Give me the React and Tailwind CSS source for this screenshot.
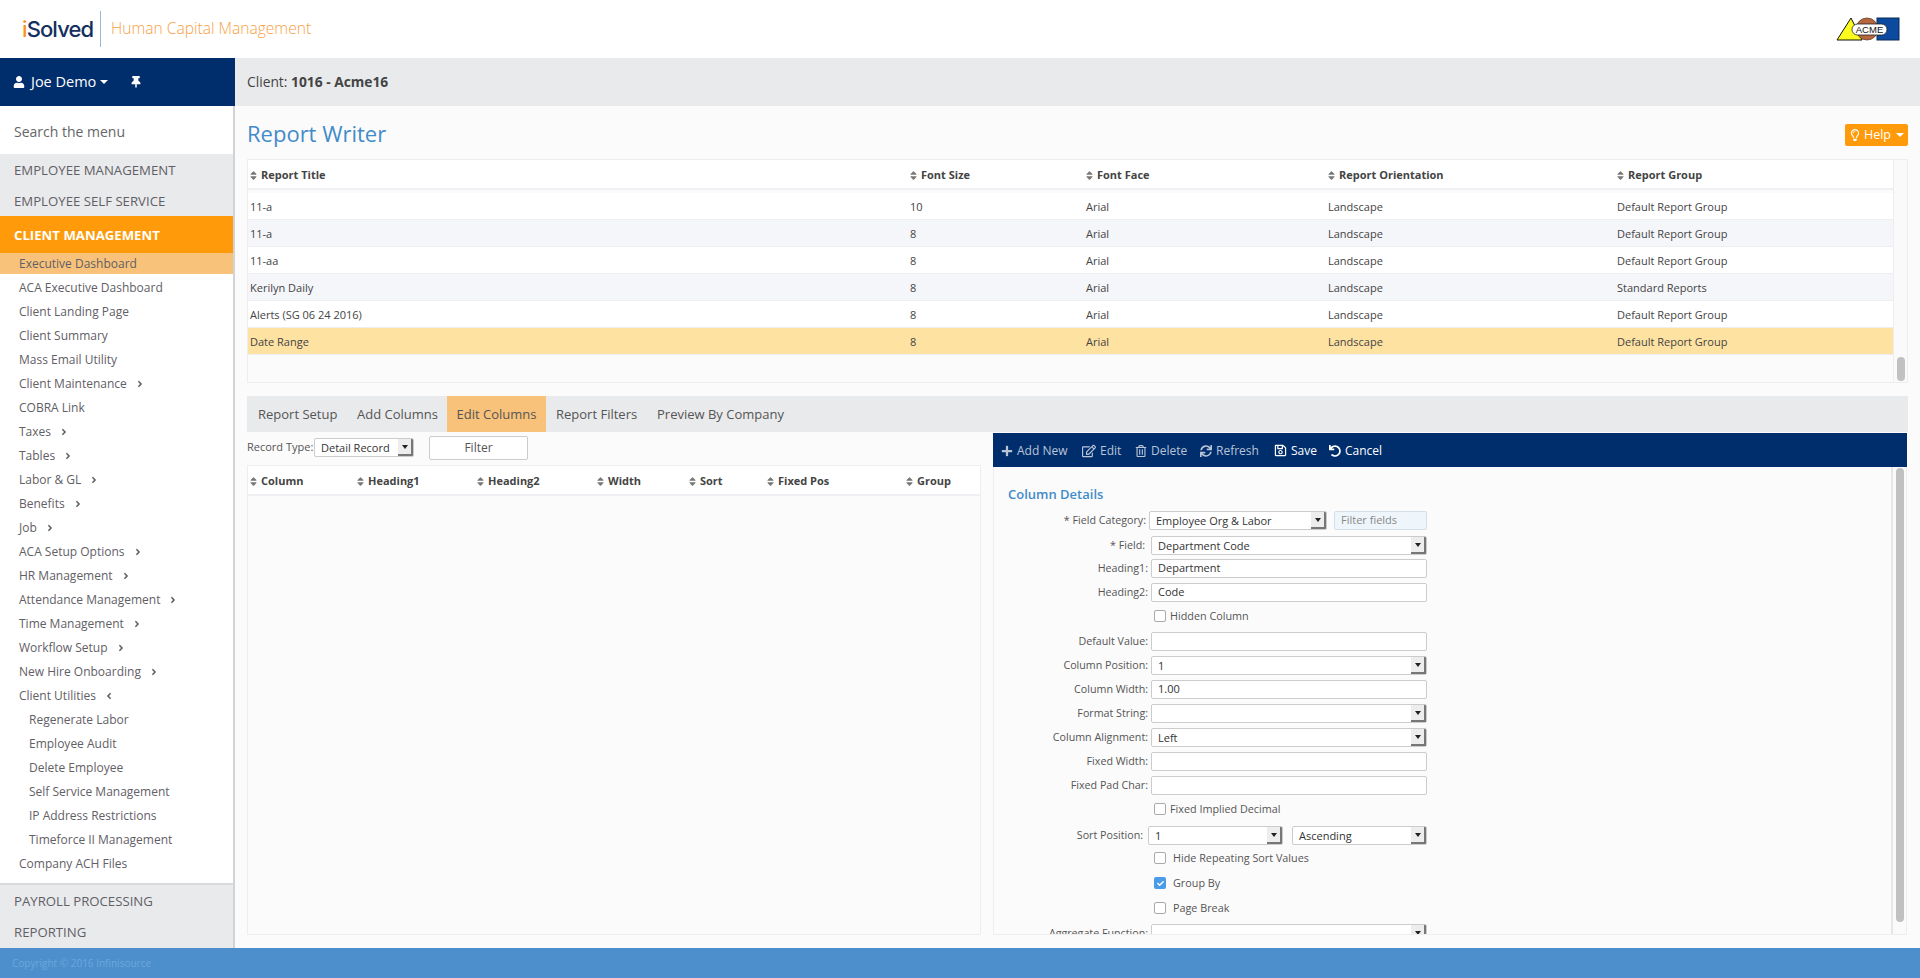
import React from "react";
import { FaUser, FaThumbtack, FaSort, FaPlus, FaRegEdit, FaRegTrashAlt, FaSync, FaRegSave, FaUndo, FaRegLightbulb, FaAngleRight, FaAngleLeft, FaCheck } from "react-icons/fa";

const menu = [
  { t: "ACA Executive Dashboard" },
  { t: "Client Landing Page" },
  { t: "Client Summary" },
  { t: "Mass Email Utility" },
  { t: "Client Maintenance", a: "r" },
  { t: "COBRA Link" },
  { t: "Taxes", a: "r" },
  { t: "Tables", a: "r" },
  { t: "Labor & GL", a: "r" },
  { t: "Benefits", a: "r" },
  { t: "Job", a: "r" },
  { t: "ACA Setup Options", a: "r" },
  { t: "HR Management", a: "r" },
  { t: "Attendance Management", a: "r" },
  { t: "Time Management", a: "r" },
  { t: "Workflow Setup", a: "r" },
  { t: "New Hire Onboarding", a: "r" },
  { t: "Client Utilities", a: "l" },
  { t: "Regenerate Labor", n: 1 },
  { t: "Employee Audit", n: 1 },
  { t: "Delete Employee", n: 1 },
  { t: "Self Service Management", n: 1 },
  { t: "IP Address Restrictions", n: 1 },
  { t: "Timeforce II Management", n: 1 },
  { t: "Company ACH Files" },
];

const reports = [
  ["11-a", "10", "Arial", "Landscape", "Default Report Group"],
  ["11-a", "8", "Arial", "Landscape", "Default Report Group"],
  ["11-aa", "8", "Arial", "Landscape", "Default Report Group"],
  ["Kerilyn Daily", "8", "Arial", "Landscape", "Standard Reports"],
  ["Alerts (SG 06 24 2016)", "8", "Arial", "Landscape", "Default Report Group"],
  ["Date Range", "8", "Arial", "Landscape", "Default Report Group"],
];

function Caret({ className }) {
  return <span className={"inline-block w-0 h-0 border-x-[4px] border-x-transparent border-t-[4px] " + className} />;
}

function SortHead({ children }) {
  return (
    <span className="flex items-center gap-[2px] font-bold text-[11px] text-[#444] pt-[2px]">
      <FaSort className="text-[11px] text-[#777] -ml-[2px]" />
      {children}
    </span>
  );
}

function Select({ value, className }) {
  return (
    <div className={"h-[19px] flex items-center rounded-[2px] border border-[#ccc] bg-white pl-[6px] text-[11px] text-[#333] relative overflow-hidden " + className}>
      <span className="pt-[1px]">{value}</span>
      <span className="absolute right-0 top-0 bottom-0 w-[15px] bg-[#ededed] border-r-2 border-b-2 border-[#777] flex items-center justify-center">
        <Caret className="border-t-[#222] !border-x-[3px]" />
      </span>
    </div>
  );
}

function TextBox({ value, className }) {
  return (
    <div className={"h-[19px] flex items-center rounded-[2px] border border-[#ccc] bg-white pl-[6px] text-[11px] text-[#333] " + className}>
      {value}
    </div>
  );
}

function Row({ label, className, labelClass = "", children }) {
  return (
    <div className={"flex items-start gap-[3px] pl-[1px] " + className}>
      <div className={"w-[153px] h-[19px] flex items-center justify-end text-[10.7px] text-[#555] pb-[1px] " + labelClass}>{label}</div>
      {children}
    </div>
  );
}

function CheckRow({ label, checked, className, gap }) {
  return (
    <div className={"flex items-center pl-[160px] " + className}>
      {checked ? (
        <span className="w-[12px] h-[12px] rounded-[2px] bg-[#4a9be8] flex items-center justify-center text-white text-[7px]"><FaCheck /></span>
      ) : (
        <span className="w-[12px] h-[12px] rounded-[2px] border border-[#aaa] bg-white" />
      )}
      <span className={"text-[10.8px] text-[#555] " + gap}>{label}</span>
    </div>
  );
}

function Tool({ icon, label, light, className }) {
  return (
    <span className={"flex items-center gap-[4px] text-[12px] pt-[1px] " + (light ? "text-white font-medium " : "text-[#b9c4d6] ") + className}>
      {icon}
      {label}
    </span>
  );
}

export default function App() {
  return (
    <div className="h-[978px] w-[1920px] overflow-hidden flex flex-col bg-white font-['Open_Sans',sans-serif] text-[#555]">
      <header className="h-[58px] flex items-center justify-between shrink-0 bg-white">
        <div className="flex items-center">
          <span className="ml-[22px] w-[70px] font-['Inter',sans-serif] font-medium text-[22px] tracking-[-0.9px] text-[#14305e]">
            <span className="text-[#f7941e]">i</span>Solved
          </span>
          <span className="ml-[8px] w-px h-[36px] bg-[#9db8d4]" />
          <span className="ml-[10px] text-[15.6px] font-light text-[#f9a03f]">Human Capital Management</span>
        </div>
        <svg width="64" height="26" viewBox="0 0 64 26" className="mr-[20px]">
          <polygon points="1,24 15,2 26,24" fill="#fbfb1e" stroke="#111" strokeWidth="1" />
          <circle cx="31" cy="13" r="11" fill="#b5683f" stroke="#5b3320" strokeWidth="0.7" />
          <rect x="41" y="2" width="22" height="22" fill="#0b4a9e" stroke="#0a2a55" strokeWidth="1" />
          <rect x="16" y="8" width="35" height="11" rx="5.5" fill="#fff" stroke="#222" strokeWidth="0.8" />
          <text x="33.5" y="17" textAnchor="middle" fontSize="9.5" fontFamily="Liberation Sans, sans-serif" fill="#111">ACME</text>
        </svg>
      </header>

      <div className="flex h-[890px] shrink-0">
        <aside className="w-[235px] shrink-0 flex flex-col border-r-2 border-[#d2d3d5] bg-white text-[#5f6066]">
          <div className="h-[48px] shrink-0 w-[235px] bg-[#002e6d] flex items-center text-white pl-[13px] text-[14.5px]">
            <FaUser className="text-[12px]" />
            <span className="ml-[6px]">Joe Demo</span>
            <Caret className="ml-[4px] border-t-white" />
            <FaThumbtack className="ml-[22px] text-[12px]" />
          </div>
          <div className="h-[48px] shrink-0 flex items-center pl-[14px] pt-[2px] text-[14px] text-[#666]">Search the menu</div>
          <div className="bg-[#e9eaec] shrink-0">
            <div className="h-[31px] flex items-center pl-[14px] pt-[2px] text-[13.2px]">EMPLOYEE MANAGEMENT</div>
            <div className="h-[31px] flex items-center pl-[14px] pt-[2px] text-[13.2px]">EMPLOYEE SELF SERVICE</div>
          </div>
          <div className="h-[37px] shrink-0 bg-[#ff9a0a] flex items-center pl-[14px] pt-[2px] text-[13.2px] font-bold text-white">CLIENT MANAGEMENT</div>
          <div className="h-[21px] shrink-0 bg-[#f8c27a] flex items-center pl-[19px] text-[12px]">Executive Dashboard</div>
          <div className="pt-[2px] shrink-0">
            {menu.map((m) => (
              <div key={m.t} className={"h-[24px] flex items-center text-[12px] " + (m.n ? "pl-[29px]" : "pl-[19px]")}>
                {m.t}
                {m.a === "r" && <FaAngleRight className="ml-[8px] text-[10px]" />}
                {m.a === "l" && <FaAngleLeft className="ml-[8px] text-[10px]" />}
              </div>
            ))}
          </div>
          <div className="mt-[7px] border-t-2 border-[#d9dadc] bg-[#e9eaec] flex-1">
            <div className="h-[31px] flex items-center pl-[14px] pt-[3px] text-[13.2px]">PAYROLL PROCESSING</div>
            <div className="h-[31px] flex items-center pl-[14px] pt-[3px] text-[13.2px]">REPORTING</div>
          </div>
        </aside>

        <main className="flex-1 flex flex-col min-w-0">
          <div className="h-[48px] shrink-0 bg-[#e9eaec] flex items-center pl-[12px] pt-[1px] text-[13.8px] text-[#444]">
            Client:&nbsp;<b className="font-bold">1016 - Acme16</b>
          </div>
          <div className="flex-1 bg-[#fbfbfb] pl-[12px] pr-[12px] flex flex-col min-h-0">
            <div className="h-[53px] shrink-0 flex items-center justify-between">
              <h1 className="text-[22px] leading-none text-[#428bca]">Report Writer</h1>
              <button className="mt-[5px] w-[63px] h-[22px] rounded-[2px] bg-[#ff9a0a] text-white text-[12.5px] flex items-center justify-center gap-[3px]">
                <FaRegLightbulb className="text-[12px]" />
                Help
                <Caret className="ml-[2px] border-t-white" />
              </button>
            </div>

            <div className="h-[224px] shrink-0 flex border-y border-[#eeeeee]">
              <div className="flex-1 border-l border-[#eee] flex flex-col min-w-0">
                <div className="h-[30px] bg-white border-b-2 border-[#f0f0f4] grid grid-cols-[660px_176px_242px_289px_1fr] items-center pl-[2px]">
                  <SortHead>Report Title</SortHead>
                  <SortHead>Font Size</SortHead>
                  <SortHead>Font Face</SortHead>
                  <SortHead>Report Orientation</SortHead>
                  <SortHead>Report Group</SortHead>
                </div>
                <div className="h-[3px]" />
                {reports.map((r, i) => (
                  <div
                    key={i}
                    className={
                      "h-[27px] grid grid-cols-[660px_176px_242px_289px_1fr] items-center pl-[2px] pt-[2px] text-[11px] text-[#444] border-b border-[#eeeef0] " +
                      (i === 5 ? "bg-[#fee2a2]" : i % 2 ? "bg-[#f5f6fa]" : "bg-white")
                    }
                  >
                    {r.map((c, j) => (
                      <span key={j}>{c}</span>
                    ))}
                  </div>
                ))}
              </div>
              <div className="w-[15px] shrink-0 border-x border-[#eee] bg-[#fafafa] flex flex-col justify-end items-center pb-[1px]">
                <div className="w-[8px] h-[24px] rounded-full bg-[#c1c1c1]" />
              </div>
            </div>

            <div className="mt-[13px] h-[36px] shrink-0 bg-[#e9eaec] flex items-stretch text-[13px] text-[#555]">
              <span className="flex items-center pl-[11px] pt-[1px] w-[110px]">Report Setup</span>
              <span className="flex items-center pt-[1px] w-[90px]">Add Columns</span>
              <span className="flex items-center justify-center pt-[1px] w-[99px] bg-[#f8c27a]">Edit Columns</span>
              <span className="flex items-center pl-[10px] pt-[1px] w-[111px]">Report Filters</span>
              <span className="flex items-center pt-[1px]">Preview By Company</span>
            </div>

            <div className="flex h-[503px] shrink-0 gap-[12px]">
              <div className="w-[734px] shrink-0 flex flex-col">
                <div className="h-[33px] shrink-0 flex items-center pb-[2px] text-[11px] text-[#555]">
                  <span className="w-[67px]">Record Type:</span>
                  <div className="w-[100px]"><Select value="Detail Record" className="w-[100px]" /></div>
                  <button className="ml-[15px] w-[99px] h-[24px] rounded-[2px] border border-[#ccc] bg-white text-[12px] text-[#555]">Filter</button>
                </div>
                <div className="flex-1 border border-[#eee] flex flex-col">
                  <div className="h-[30px] border-b-2 border-[#f0f0f4] bg-white grid grid-cols-[107px_120px_120px_92px_78px_139px_1fr] items-center pl-[2px]">
                    <SortHead>Column</SortHead>
                    <SortHead>Heading1</SortHead>
                    <SortHead>Heading2</SortHead>
                    <SortHead>Width</SortHead>
                    <SortHead>Sort</SortHead>
                    <SortHead>Fixed Pos</SortHead>
                    <SortHead>Group</SortHead>
                  </div>
                </div>
              </div>

              <div className="w-[914px] shrink-0 flex flex-col pt-[1px]">
                <div className="h-[34px] shrink-0 bg-[#002e6d] flex items-center pl-[8px]">
                  <Tool className="w-[81px]" icon={<FaPlus className="text-[12px]" />} label="Add New" />
                  <Tool className="w-[53px]" icon={<FaRegEdit className="text-[14px]" />} label="Edit" />
                  <Tool className="w-[65px]" icon={<FaRegTrashAlt className="text-[12px]" />} label="Delete" />
                  <Tool className="w-[74px]" icon={<FaSync className="text-[12px]" />} label="Refresh" />
                  <Tool light className="w-[55px]" icon={<FaRegSave className="text-[13px]" />} label="Save" />
                  <Tool light icon={<FaUndo className="text-[12px]" />} label="Cancel" />
                </div>
                <div className="h-[468px] border-x border-b border-[#eee] flex overflow-hidden">
                  <div className="flex-1 min-w-0 overflow-hidden">
                    <div className="h-[44px] pt-[18px] pl-[14px] text-[13px] font-semibold leading-[18px] text-[#428bca]">Column Details</div>
                    <Row label="* Field Category:" labelClass="pr-[2px]" className="h-[25px]">
                      <Select value="Employee Org & Labor" className="w-[178px] -ml-[2px] mr-[4px]" />
                      <div className="w-[93px] h-[19px] flex items-center rounded-[2px] border border-[#d5dfe6] bg-[#eef6fb] pl-[6px] text-[11px] text-[#888]">Filter fields</div>
                    </Row>
                    <Row label="* Field:" labelClass="pr-[3px]" className="h-[23px]"><Select value="Department Code" className="w-[276px]" /></Row>
                    <Row label="Heading1:" className="h-[24px]"><TextBox value="Department" className="w-[276px]" /></Row>
                    <Row label="Heading2:" className="h-[24px]"><TextBox value="Code" className="w-[276px]" /></Row>
                    <CheckRow label="Hidden Column" gap="ml-[4px]" className="h-[25px] pb-[7px]" />
                    <Row label="Default Value:" className="h-[24px]"><TextBox className="w-[276px]" /></Row>
                    <Row label="Column Position:" className="h-[24px]"><Select value="1" className="w-[276px]" /></Row>
                    <Row label="Column Width:" className="h-[24px]"><TextBox value="1.00" className="w-[276px]" /></Row>
                    <Row label="Format String:" className="h-[24px]"><Select className="w-[276px]" /></Row>
                    <Row label="Column Alignment:" className="h-[24px]"><Select value="Left" className="w-[276px]" /></Row>
                    <Row label="Fixed Width:" className="h-[24px]"><TextBox className="w-[276px]" /></Row>
                    <Row label="Fixed Pad Char:" className="h-[24px]"><TextBox className="w-[276px]" /></Row>
                    <CheckRow label="Fixed Implied Decimal" gap="ml-[4px]" className="h-[26px] pb-[8px]" />
                    <Row label="Sort Position:" labelClass="pr-[5px]" className="h-[24px]">
                      <Select value="1" className="w-[135px] -ml-[3px] mr-[6px]" />
                      <Select value="Ascending" className="w-[135px]" />
                    </Row>
                    <CheckRow label="Hide Repeating Sort Values" gap="ml-[7px]" className="h-[25px] pb-[9px]" />
                    <CheckRow label="Group By" checked gap="ml-[7px]" className="h-[25px] pb-[9px]" />
                    <CheckRow label="Page Break" gap="ml-[7px]" className="h-[24px] pb-[8px]" />
                    <Row label="Aggregate Function:" className="h-[19px]"><Select className="w-[276px]" /></Row>
                  </div>
                  <div className="w-[15px] shrink-0 border-l-2 border-[#e6e6e6] bg-[#fafafa] flex justify-center pt-[1px]">
                    <div className="w-[8px] h-[454px] rounded-full bg-[#c1c1c1]" />
                  </div>
                </div>
              </div>
            </div>
          </div>
        </main>
      </div>

      <footer className="h-[30px] shrink-0 bg-[#4d8fcc] flex items-center pl-[12px] text-[10px] text-[#6ea6dc]">
        Copyright © 2016 Infinisource
      </footer>
    </div>
  );
}
